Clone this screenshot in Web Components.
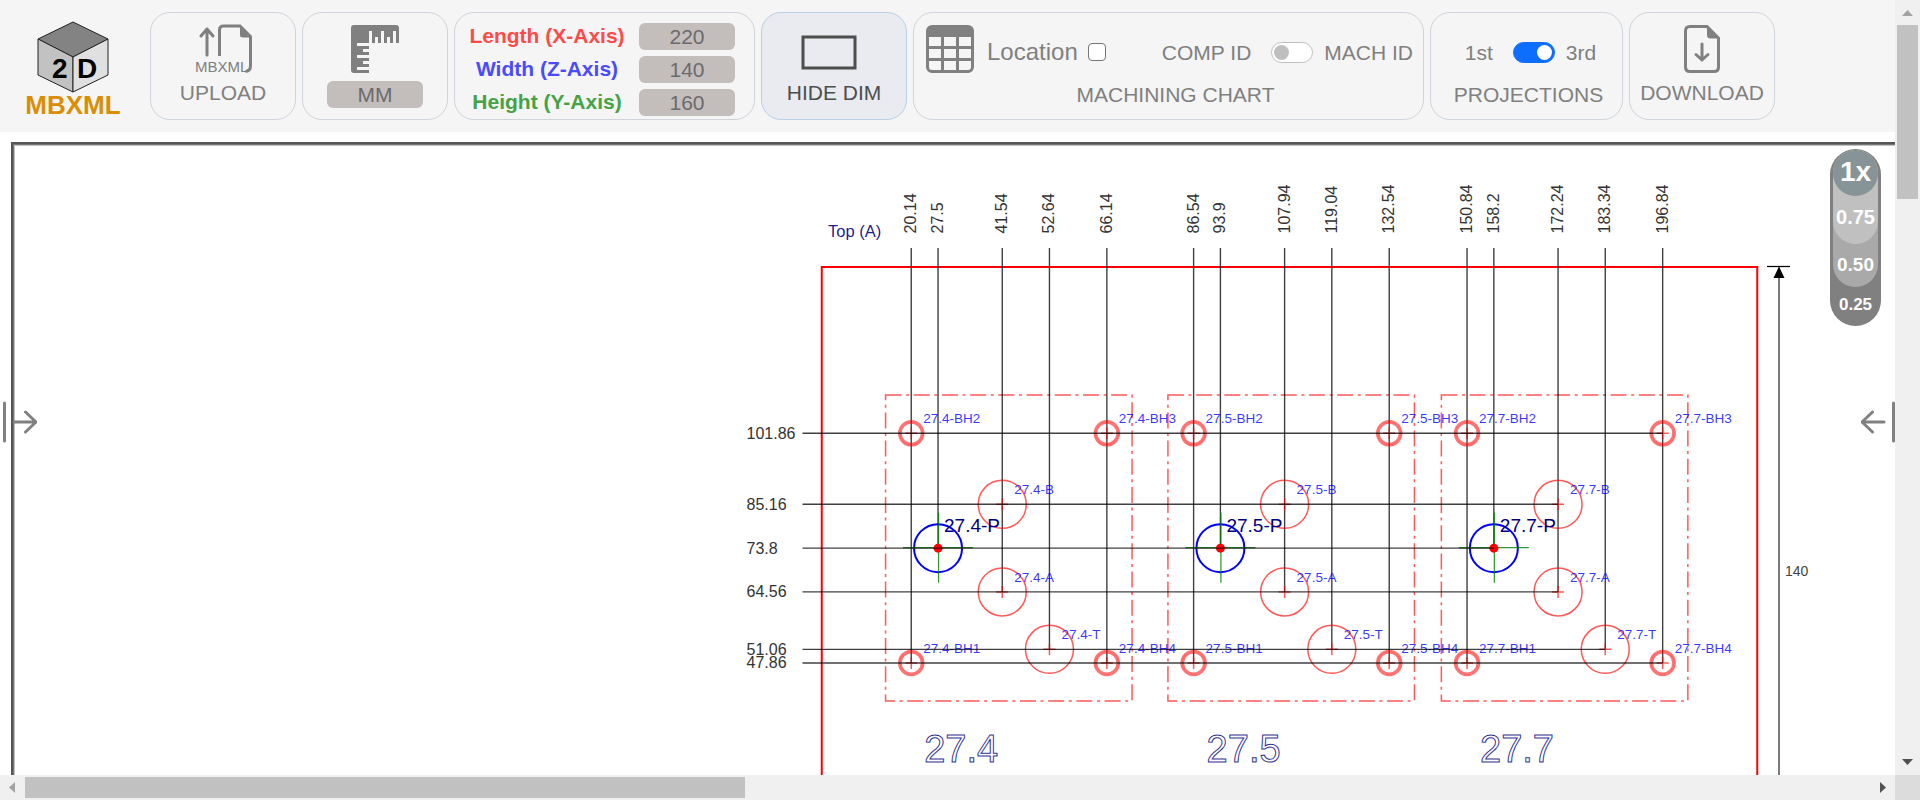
<!DOCTYPE html>
<html lang="en">
<head>
<meta charset="utf-8">
<title>2D MBXML</title>
<style>
html, body { margin: 0; height: 100%; overflow: hidden; background: #fff; font-family: "Liberation Sans", Arial, sans-serif; }
</style>
</head>
<body>
<mb-app></mb-app>
<script>
const define = (name, html, setup) => {
  const tpl = document.createElement('template');
  tpl.innerHTML = html;
  customElements.define(name, class extends HTMLElement {
    constructor() {
      super();
      this.attachShadow({ mode: 'open' }).append(tpl.content.cloneNode(true));
    }
    connectedCallback() { if (setup) setup(this.shadowRoot, this); }
  });
};

/* Rounded toolbar card: icon or controls on top, caption below */
define('tool-card', `
<style>
:host { display: flex; box-sizing: border-box; height: 108px; border: 1px solid #ced4da; border-radius: 20px; color: #808080; font-size: 21px; line-height: 24px; white-space: nowrap; flex: none; }
:host([active]) { background: #e9ebf0; border-color: #b8cfe8; color: #4d4d4d; }
.body { flex: 1; display: flex; flex-direction: column; align-items: center; padding-top: 10px; }
.top { height: 52px; display: flex; align-items: center; justify-content: center; width: 100%; }
.caption { padding-top: 6px; }
</style>
<div class="body"><div class="top"><slot name="top"></slot></div><div class="caption"><slot></slot></div></div>`);

define('mb-logo', `
<style>
:host { display: flex; flex-direction: column; align-items: center; width: 98px; flex: none; font: bold 26px/24px "Liberation Sans", Arial, sans-serif; color: #d98e04; }
svg { display: block; }
.c { font: bold 28px "Liberation Sans", Arial, sans-serif; fill: #000; }
</style>
<svg width="72" height="72" viewBox="0 0 72 72" stroke="#222" stroke-width="1">
<path d="M36 1 71 18 36 36 1 18z" fill="#838383"/><path d="M1 18 36 36V71L1 54z" fill="#c2c2c2"/><path d="M71 18 36 36V71L71 54z" fill="#e0e0e0"/>
<g stroke="none"><text class="c" x="15" y="57">2</text><text class="c" x="40" y="57">D</text></g>
</svg><span>MBXML</span>`);

define('value-box', `
<style>
:host { display: block; }
input { display: block; box-sizing: border-box; width: 96px; height: 27px; border: 0; border-radius: 6px; padding: 0; background: #c3bdbc; color: #6b6b6b; text-align: center; font: 21px "Liberation Sans", Arial, sans-serif; }
</style>
<input readonly>`, (r, h) => { const i = r.querySelector('input'); i.value = h.getAttribute('value'); i.setAttribute('aria-label', h.getAttribute('label')); });

define('size-card', `
<style>
:host { display: grid; box-sizing: border-box; width: 301px; height: 108px; border: 1px solid #ced4da; border-radius: 20px; grid-template-columns: 160px 96px; column-gap: 12px; row-gap: 6px; align-content: start; padding: 10px 0 0 12px; font-weight: bold; font-size: 21px; line-height: 25px; text-align: center; flex: none; white-space: nowrap; }
.x { color: #ff4a4a; } .z { color: #4a4aff; } .y { color: #45a345; }
</style>
<span class="x">Length (X-Axis)</span><value-box value="220" label="Length (X-Axis)"></value-box>
<span class="z">Width (Z-Axis)</span><value-box value="140" label="Width (Z-Axis)"></value-box>
<span class="y">Height (Y-Axis)</span><value-box value="160" label="Height (Y-Axis)"></value-box>`);

define('toggle-switch', `
<style>
:host { display: block; }
label { display: flex; align-items: center; }
input { appearance: none; box-sizing: border-box; width: 42px; height: 21px; margin: 0 11px 0 20px; border: 1px solid #bfbfbf; border-radius: 11px; background: #fff; display: flex; align-items: center; padding: 0 2px; }
input::before { content: ""; width: 15px; height: 15px; border-radius: 50%; background: #bfbfbf; }
input:checked { background: #0d6efd; border-color: #0d6efd; justify-content: flex-end; }
input:checked::before { background: #fff; }
</style>
<label><slot name="off"></slot><input type="checkbox" role="switch"><slot name="on"></slot></label>`, (r, h) => { r.querySelector('input').checked = h.hasAttribute('checked'); });

define('mb-toolbar', `
<style>
:host { display: flex; gap: 6px; padding: 12px 24px; background: #f5f5f5; align-items: flex-start; overflow: hidden; }
mb-logo { margin: 9px 22px 0 0; }
svg { display: block; }
.w { width: 146px; } .chart { width: 511px; } .proj { width: 193px; }
button { all: unset; cursor: pointer; }
.unit { display: block; width: 96px; height: 27px; line-height: 27px; border-radius: 6px; background: #c3bdbc; color: #6b6b6b; text-align: center; }
.row { display: flex; align-items: center; width: 100%; box-sizing: border-box; padding: 0 10px 0 12px; }
.loc { display: flex; align-items: center; gap: 10px; font-size: 24px; margin: 6px auto 0 13px; }
.loc input { appearance: none; width: 18px; height: 18px; box-sizing: border-box; border: 1px solid #767676; border-radius: 4px; background: #fff; margin: 0; }
.sw { padding-top: 7px; }
.proj .sw { padding-left: 8px; }
.low { display: block; padding-top: 2px; }
.chart .low { padding-left: 14px; }
.proj .low { padding-left: 4px; }
</style>
<mb-logo></mb-logo>
<tool-card class="w">
<svg slot="top" width="60" height="50" viewBox="0 0 60 50" fill="none" stroke="#808080" stroke-width="3">
<path d="M14 31V5M8 12 14 5l6 7" stroke-linecap="round" stroke-linejoin="round"/><path d="M26.500 32V6q0-4 4-4H47L57.500 12.500V42q0 5-5 5.500"/><path d="M47 1v10q0 2.500 2.500 2.500H59z" fill="#808080" stroke="none"/>
<text x="2" y="48" fill="#808080" stroke="none" font-size="15">MBXML</text></svg>
<button>UPLOAD</button></tool-card>
<tool-card class="w"><svg slot="top" width="48" height="48" viewBox="0 0 48 48" fill="#808080"><path d="M3 0H45q3 0 3 3V18H45V6H42V18H39V12H36V18H33V6H30V18H27V12H24V18H21V6H18V18H6v3H18v3H12v3h6v3H6v3H18v3H12v3h6v3H6v3H18v3H3q-3 0-3-3V3Q0 0 3 0Z"/></svg><button class="unit">MM</button></tool-card>
<size-card></size-card>
<tool-card class="w" active><svg slot="top" width="68" height="52" viewBox="0 0 68 52"><rect x="3" y="14" width="52" height="31" fill="none" stroke="#4d4d4d" stroke-width="3"/></svg><button>HIDE DIM</button></tool-card>
<tool-card class="chart"><div slot="top" class="row">
<svg width="48" height="48" viewBox="0 0 16 16" fill="#808080"><path d="M0 2a2 2 0 0 1 2-2h12a2 2 0 0 1 2 2v12a2 2 0 0 1-2 2H2a2 2 0 0 1-2-2zm15 2h-4v3h4zm0 4h-4v3h4zm0 4h-4v3h3a1 1 0 0 0 1-1zm-5 3v-3H6v3zm-5 0v-3H1v2a1 1 0 0 0 1 1zm-4-4h4V8H1zm0-4h4V4H1zm5-3v3h4V4zm4 4H6v3h4z"/></svg>
<label class="loc">Location<input type="checkbox"></label>
<toggle-switch class="sw"><span slot="off">COMP ID</span><span slot="on">MACH ID</span></toggle-switch></div><span class="low">MACHINING CHART</span></tool-card>
<tool-card class="proj"><toggle-switch slot="top" class="sw" checked><span slot="off">1st</span><span slot="on">3rd</span></toggle-switch><span class="low">PROJECTIONS</span></tool-card>
<tool-card class="w"><svg slot="top" width="36" height="48" viewBox="0 0 36 48" fill="none" stroke="#808080" stroke-width="3"><path d="M6 1.500H23L34.500 13V42q0 4.500-4.500 4.500H6q-4.500 0-4.500-4.500V6Q1.500 1.500 6 1.500Z"/><path d="M23 1v9q0 3.500 3.500 3.500H35z" fill="#808080" stroke="none"/><path d="M18 19V35M12 29.500l6 5.500 6-5.500" stroke-linecap="round" stroke-linejoin="round"/></svg><button>DOWNLOAD</button></tool-card>`);

define('zoom-levels', `
<style>
:host { display: block; width: 51px; height: 177px; box-sizing: border-box; border-radius: 26px; background: #808080; padding-top: 1px; }
div { width: 45px; margin: 0 auto; border-radius: 23px; }
button { all: unset; display: block; width: 100%; text-align: center; color: #fff; font-weight: bold; cursor: pointer; }
.a { background: #a9a9a9; height: 137px; } .b { background: #c0c0c0; height: 94px; } .c { background: #869397; height: 46px; }
.c button { font-size: 28px; line-height: 44px; }
.b > button { font-size: 20px; line-height: 42px; }
.a > button { font-size: 19px; line-height: 41px; }
.q { font-size: 17px; line-height: 36px; }
</style>
<div class="a"><div class="b"><div class="c"><button>1x</button></div><button>0.75</button></div><button>0.50</button></div><button class="q">0.25</button>`);

/* Plan view. Coordinates are half pixels of the sheet. */
define('panel-drawing', `
<style>
:host { display: block; }
svg { display: block; font-family: "Liberation Sans", Arial, sans-serif; }
.dim { font-size: 32px; fill: #333; }
.id { font-size: 27px; fill: #0000ff; fill-opacity: .8; }
.pid { font-size: 38px; fill: #000080; }
.big { font-size: 76px; fill: none; stroke: #000080; stroke-width: 2; stroke-opacity: .85; }
.ln { stroke: #000; stroke-width: 2.800; stroke-opacity: .75; }
.red { stroke: #ff0000; fill: none; stroke-width: 3; stroke-opacity: .65; }
.ring { stroke-width: 4; stroke-opacity: .55; }
</style>
<svg width="2400" height="1000" viewBox="30 292 4800 2000"></svg>`, root => {
  const svg = root.querySelector('svg');
  const S = 8.505, X = v => 1651.2 + v * S, Y = v => 866.6 + (101.86 - v) * S;
  const DATUM = 9;
  const vline = (v, to, k = 0) => `<path class="ln" d="M${X(v) - k} 496V${Y(to) - k}"/><text class="dim" transform="translate(${X(v) - k + 10} 467) rotate(-90)">${+v.toFixed(2)}</text>`;
  let out = `<rect x="1643.500" y="534" width="1871" height="1191" fill="none" stroke="#ff0000" stroke-width="4"/>
  <text x="1656" y="473" font-size="33" fill="#000080" fill-opacity=".9">Top (A)</text>`;
  const mods = [['27.4', 0], ['27.5', 66.4], ['27.7', 130.7]];
  for (const [id, o] of mods) {
    const hole = (dx, z, tag, small) => {
      const x = X(o + dx), y = Y(z);
      return (small ? `<circle class="red ring" cx="${x}" cy="${y}" r="24.500"/><circle class="red ring" cx="${x}" cy="${y}" r="21"/>` : `<circle class="red" cx="${x}" cy="${y}" r="48"/>`)
        + `<path class="red" d="M${x - 12} ${y}h24M${x} ${y - 12}v24"/><text class="id" x="${x + 24}" y="${y - 20}">${id}-${tag}</text>`;
    };
    const px = X(o + 27.5) - DATUM, py = Y(73.8) - DATUM;
    out += `<path class="red" stroke-dasharray="32 9.200 6 9.200" d="M${X(o + 14.1)} 790h493v612h-493z"/>`
      + vline(o + 20.14, 47.86) + vline(o + 27.5, 73.8, DATUM) + vline(o + 41.54, 64.56) + vline(o + 52.64, 51.06) + vline(o + 66.14, 47.86)
      + hole(20.14, 101.86, 'BH2', 1) + hole(66.14, 101.86, 'BH3', 1) + hole(41.54, 85.16, 'B') + hole(41.54, 64.56, 'A') + hole(52.64, 51.06, 'T') + hole(20.14, 47.86, 'BH1', 1) + hole(66.14, 47.86, 'BH4', 1)
      + `<circle cx="${px}" cy="${py}" r="48" fill="none" stroke="#0000ff" stroke-width="4"/><path d="M${px - 70} ${py - 1}h140M${px + 1} ${py - 71}v140" stroke="#008000" stroke-width="2.500" stroke-opacity=".8"/><circle cx="${px}" cy="${py}" r="9" fill="#ff0000"/><text class="pid" x="${px + 12}" y="${py - 32}">${id}-P</text><text class="big" x="${X(o + 20.14) + 26}" y="1524">${id}</text>`;
  }
  for (const [z, end, k] of [[101.86, 196.84, 0], [85.16, 172.24, 0], [73.8, 158.2, DATUM], [64.56, 172.24, 0], [51.06, 183.34, 0], [47.86, 196.84, 0]])
    out += `<path class="ln" d="M1605 ${Y(z) - k}H${X(end) - k}"/><text class="dim" x="1493" y="${Y(z) - k + 11}">${z}</text>`;
  out += `<path d="M3534 533h46" stroke="#000" stroke-width="2.500"/><path class="ln" d="M3558 535V1725"/><path d="M3558 533l11 23h-22z"/><text x="3570" y="1151" font-size="28" fill="#444">140</text>`;
  svg.innerHTML = out;
});

define('edge-handle', `
<style>
:host { display: block; }
button { all: unset; display: block; cursor: pointer; }
svg { display: block; }
:host([flip]) svg { transform: scaleX(-1); }
</style>
<button aria-label="Open panel"><svg width="34" height="44" viewBox="0 0 34 44" fill="none" stroke="#808080" stroke-width="3" stroke-linecap="round" stroke-linejoin="round"><path d="M1.500 3V41M11 22H33M22.500 12 33 22 22.500 32"/></svg></button>`);

define('scroll-track', `
<style>
:host { display: flex; background: #f0f0f0; align-items: center; overflow: hidden; }
:host([vertical]) { flex-direction: column; }
svg { flex: none; }
.thumb { background: #c1c1c1; flex: none; width: 38%; height: 21px; }
:host([vertical]) .thumb { width: 21px; height: 174px; }
i { flex: 1; }
.h { display: block; } .v { display: none; }
:host([vertical]) .v { display: block; } :host([vertical]) .h { display: none; }
</style>
<svg class="h" width="25" height="25"><path d="M15 7v11l-6-5.500z" fill="#a3a3a3"/></svg><svg class="v" width="25" height="25"><path d="M7 16h11l-5.500-6z" fill="#a3a3a3"/></svg>
<div class="thumb"></div><i></i>
<svg class="h" width="25" height="25"><path d="M10 7v11l6-5.500z" fill="#505050"/></svg><svg class="v" width="25" height="25"><path d="M7 9h11l-5.500 6z" fill="#505050"/></svg>`);

define('mb-app', `
<style>
:host { display: grid; height: 100vh; grid-template: minmax(0, 1fr) 25px / minmax(0, 1fr) 25px; }
.page { display: flex; flex-direction: column; overflow: hidden; position: relative; }
mb-toolbar { flex: none; }
.sheet { flex: 1; min-height: 0; margin: 10px 0 0 11px; border: solid #555; border-width: 2px 0 0 2px; overflow: hidden; }
.inner { border: solid #777; border-width: 1px 0 0 1px; height: 100%; }
.core { border: solid #c0c0c0; border-width: 1px 0 0 1px; height: 100%; }
zoom-levels { position: absolute; right: 14px; top: 149px; }
.l, .r { position: absolute; top: 400px; } .l { left: 3px; } .r { right: 0; }
.corner { background: #dcdcdc; }
</style>
<main class="page"><mb-toolbar></mb-toolbar><div class="sheet"><div class="inner"><div class="core"><panel-drawing></panel-drawing></div></div></div>
<zoom-levels></zoom-levels><edge-handle class="l"></edge-handle><edge-handle class="r" flip></edge-handle></main>
<scroll-track vertical></scroll-track><scroll-track></scroll-track><div class="corner"></div>`);
</script>
</body>
</html>
